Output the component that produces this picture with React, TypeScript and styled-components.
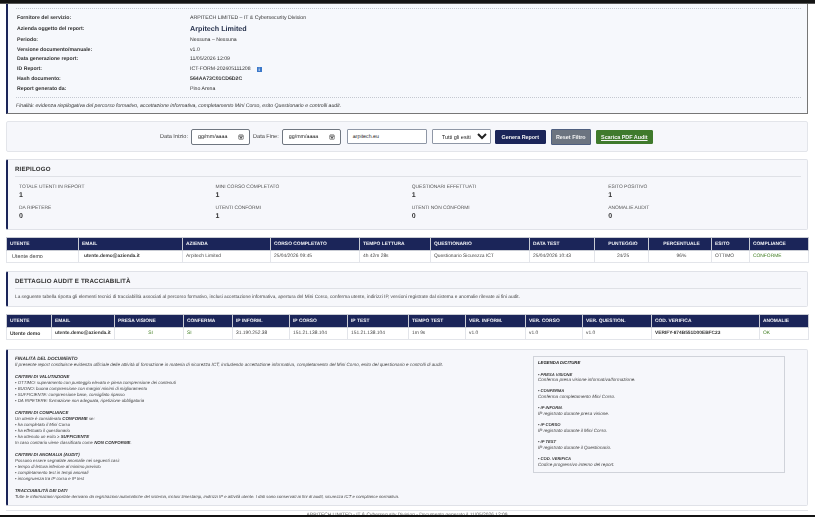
import React from "react";
import styled, { createGlobalStyle } from "styled-components";

const GlobalStyle = createGlobalStyle`
  html, body {
    margin: 0;
    height: 517px;
    overflow: hidden;
    background: #fff;
    font-family: "Liberation Sans", Arial, sans-serif;
    color: #222;
    text-rendering: geometricPrecision;
  }
`;

const Page = styled.div`
  position: relative;
  height: 517px;
  overflow: hidden;
  filter: blur(0.3px);
`;

const TopBar = styled.div`
  height: 4px;
  background: #141414;
  border-bottom: 1px solid #555;
  box-sizing: border-box;
`;

const Content = styled.div`
  padding: 0 7px 0 6px;
`;

const HeaderPanel = styled.section`
  box-sizing: border-box;
  height: 110px;
  background: #f6f8fc;
  border: 1px solid #777;
  border-top: 0;
  border-left: 2px solid #1b2559;
  padding: 4px 6px 0 8px;
`;

const Dotted = styled.div`
  border-top: 1px dotted #c4c8d0;
`;

const InfoGrid = styled.dl`
  display: grid;
  grid-template-columns: 173px 1fr;
  grid-template-rows: 9.8px 12.5px repeat(6, 9.8px);
  align-items: center;
  margin: 3.7px 0 3px;
  padding-left: 1px;
`;

const InfoLabel = styled.dt`
  font-size: 5.2px;
  font-weight: bold;
  color: #333;
`;

const InfoValue = styled.dd<{ $strong?: boolean }>`
  margin: 0;
  font-size: 5.2px;
  font-weight: ${(p) => (p.$strong ? "bold" : "normal")};
  color: #333;
  display: flex;
  align-items: center;
  gap: 6px;
`;

const CompanyValue = styled.dd`
  margin: 0;
  font-size: 7.2px;
  font-weight: bold;
  color: #2a3550;
`;

const InfoBadge = styled.span`
  width: 5px;
  height: 5px;
  background: #3b78c9;
  color: #fff;
  font-size: 4.5px;
  font-weight: bold;
  line-height: 5px;
  text-align: center;
`;

const Purpose = styled.p`
  margin: 5px 0 0;
  font-size: 5.15px;
  font-style: italic;
  color: #333;
`;

const FilterBar = styled.form`
  box-sizing: border-box;
  height: 31px;
  margin-top: 7px;
  background: #f6f7fb;
  border: 1px solid #e3e5ea;
  border-radius: 2px;
  padding-left: 153px;
  display: flex;
  align-items: center;
`;

const FilterLabel = styled.label`
  font-size: 5.6px;
  color: #444;
  margin-right: 3px;
`;

const DateField = styled.div`
  box-sizing: border-box;
  width: 59px;
  height: 16px;
  margin-right: 3px;
  background: #fff;
  border: 1px solid #6f7680;
  border-radius: 2px;
  padding: 0 5px 0 6px;
  font-size: 5.3px;
  color: #222;
  display: flex;
  align-items: center;
  justify-content: space-between;
`;

const DomainField = styled.div`
  box-sizing: border-box;
  width: 80px;
  height: 15px;
  margin: 0 5px 0 3px;
  background: #fff;
  border: 1px solid #8f97a6;
  border-radius: 1px;
  padding-left: 5px;
  font-size: 5.3px;
  line-height: 14px;
`;

const OutcomeSelect = styled.select`
  box-sizing: border-box;
  width: 59px;
  height: 15px;
  margin-right: 4px;
  background: #fff;
  border: 1px solid #8f97a6;
  border-radius: 1px;
  padding: 0 0 0 5px;
  font-family: inherit;
  font-size: 5.5px;
  color: #222;
`;

const ActionButton = styled.button<{ $bg: string; $w: number; $h?: number; $under?: boolean }>`
  box-sizing: border-box;
  width: ${(p) => p.$w}px;
  height: ${(p) => p.$h ?? 14}px;
  margin-right: 5px;
  padding: 0;
  background: ${(p) => p.$bg};
  border: 1px solid ${(p) => (p.$h ? "#4f5f80" : p.$bg)};
  border-radius: 1px;
  color: #f4f4f4;
  font-family: inherit;
  font-size: 5.4px;
  font-weight: bold;
  text-decoration: ${(p) => (p.$under ? "underline" : "none")};
`;

const Card = styled.section<{ $h: number; $mt: number }>`
  box-sizing: border-box;
  height: ${(p) => p.$h}px;
  margin-top: ${(p) => p.$mt}px;
  background: #f6f7fb;
  border: 1px solid #e0e2e8;
  border-left: 2px solid #1b2559;
  border-radius: 2px;
`;

const CardHead = styled.h2<{ $top: number }>`
  margin: 0 6px 0 7px;
  padding: ${(p) => p.$top}px 0 3.2px;
  font-size: 6.2px;
  line-height: 7px;
  letter-spacing: 0.15px;
  font-weight: bold;
  color: #333;
  border-bottom: 1px solid #dfe1e6;
`;

const StatsGrid = styled.div`
  display: grid;
  grid-template-columns: repeat(4, 196.4px);
  grid-auto-rows: 20.4px;
  padding: 8px 0 0 11px;
`;

const Stat = styled.div`
  display: flex;
  flex-direction: column;
  gap: 2px;
`;

const StatLabel = styled.span`
  font-size: 4.9px;
  line-height: 5px;
  color: #555;
`;

const StatValue = styled.span`
  font-size: 7px;
  line-height: 7px;
  font-weight: bold;
  color: #333;
`;

const AuditNote = styled.p`
  margin: 6px 0 0 7px;
  font-size: 4.76px;
  line-height: 6px;
  color: #444;
`;

const DataTable = styled.table<{ $mt: number }>`
  width: 802px;
  margin-top: ${(p) => p.$mt}px;
  table-layout: fixed;
  border-collapse: collapse;
  border: 1px solid #d8dbe2;
`;

const HeadCell = styled.th<{ $center?: boolean }>`
  height: 12px;
  padding: 0 0 0 3px;
  background: #1b2559;
  border: 1px solid #c9ccd4;
  color: #f2f3f7;
  font-size: 4.9px;
  font-weight: bold;
  text-align: ${(p) => (p.$center ? "center" : "left")};
  overflow: hidden;
  white-space: nowrap;
`;

const BodyCell = styled.td<{ $center?: boolean; $strong?: boolean; $ok?: boolean; $pad?: number; $size?: number }>`
  height: 11px;
  padding: 0 0 0 ${(p) => p.$pad ?? 3}px;
  border: 1px solid #e3e5ea;
  background: #fff;
  color: ${(p) => (p.$ok ? "#3f7d20" : p.$strong ? "#333" : "#444")};
  font-size: ${(p) => p.$size ?? (p.$strong ? 4.85 : 4.9)}px;
  font-weight: ${(p) => (p.$strong ? "bold" : "normal")};
  text-align: ${(p) => (p.$center ? "center" : "left")};
  overflow: hidden;
  white-space: nowrap;
`;

const NotesCard = styled(Card)`
  display: flex;
  justify-content: space-between;
  padding: 6px 22px 0 7px;
`;

const NotesText = styled.div`
  width: 440px;
  line-height: 6px;
  font-style: italic;
  color: #444;
`;

const NoteBlock = styled.div<{ $size: number }>`
  margin-bottom: 6px;
  font-size: ${(p) => p.$size}px;
  white-space: pre-line;
`;

const NoteTitle = styled.div`
  font-weight: bold;
  color: #333;
`;

const NoteStrong = styled.strong`
  color: #333;
`;

const Legend = styled.aside`
  box-sizing: border-box;
  width: 252px;
  height: 117px;
  background: #f6f7fb;
  border: 1px solid #d0d3da;
  padding: 3px 4px;
  font-size: 4.6px;
  line-height: 5.6px;
  font-style: italic;
  color: #444;
`;

const LegendTitle = styled.div`
  font-size: 4.3px;
  font-weight: bold;
  color: #222;
  margin-bottom: 6px;
`;

const LegendItem = styled.div`
  margin-bottom: 5.7px;
`;

const LegendTerm = styled.div`
  font-size: 4.1px;
  font-weight: bold;
  color: #333;
`;

const FooterRule = styled.div`
  margin-top: 4px;
  border-top: 1px solid #e3e5ea;
`;

const FooterText = styled.div`
  margin-top: 2px;
  font-size: 4.9px;
  text-align: center;
  color: #666;
`;

const BottomBar = styled.div`
  position: absolute;
  left: 0;
  right: 0;
  bottom: 0;
  height: 2px;
  background: #141414;
`;

const CalendarIcon = () => (
  <svg width="6" height="6" viewBox="0 0 12 12" fill="none" stroke="#444" strokeWidth="1.2">
    <rect x="1.5" y="2" width="9" height="8.5" rx="1" />
    <path d="M1.5 4.8h9M4 1v2M8 1v2" />
    <rect x="4" y="6.3" width="4" height="2.5" fill="#444" stroke="none" />
  </svg>
);

const info: [string, string][] = [
  ["Periodo:", "Nessuna  –  Nessuna"],
  ["Versione documento/manuale:", "v1.0"],
  ["Data generazione report:", "11/05/2026 12:09"],
];

const stats = [
  ["TOTALE UTENTI IN REPORT", 1],
  ["MINI CORSO COMPLETATO", 1],
  ["QUESTIONARI EFFETTUATI", 1],
  ["ESITO POSITIVO", 1],
  ["DA RIPETERE", 0],
  ["UTENTI CONFORMI", 1],
  ["UTENTI NON CONFORMI", 0],
  ["ANOMALIE AUDIT", 0],
];

type Column = {
  title: string;
  width: number;
  value: string;
  center?: boolean;
  headCenter?: boolean;
  strong?: boolean;
  ok?: boolean;
  pad?: number;
  size?: number;
};

const summaryColumns: Column[] = [
  { title: "UTENTE", width: 72, value: "Utente demo", pad: 5, size: 5.4 },
  { title: "EMAIL", width: 104, value: "utente.demo@azienda.it", strong: true, pad: 5 },
  { title: "AZIENDA", width: 88, value: "Arpitech Limited" },
  { title: "CORSO COMPLETATO", width: 89, value: "25/04/2026 09:45" },
  { title: "TEMPO LETTURA", width: 71, value: "4h 42m 28s" },
  { title: "QUESTIONARIO", width: 99, value: "Questionario Sicurezza ICT" },
  { title: "DATA TEST", width: 65, value: "25/04/2026 10:43" },
  { title: "PUNTEGGIO", width: 54, value: "24/25", center: true, headCenter: true },
  { title: "PERCENTUALE", width: 63, value: "96%", center: true, headCenter: true },
  { title: "ESITO", width: 38, value: "OTTIMO" },
  { title: "COMPLIANCE", width: 59, value: "CONFORME", ok: true },
];

const auditColumns: Column[] = [
  { title: "UTENTE", width: 45, value: "Utente demo", strong: true, size: 5 },
  { title: "EMAIL", width: 63, value: "utente.demo@azienda.it", strong: true },
  { title: "PRESA VISIONE", width: 69, value: "SI", center: true, ok: true },
  { title: "CONFERMA", width: 49, value: "SI", ok: true },
  { title: "IP INFORM.", width: 57, value: "31.190.252.38" },
  { title: "IP CORSO", width: 58, value: "151.21.138.104" },
  { title: "IP TEST", width: 61, value: "151.21.138.104" },
  { title: "TEMPO TEST", width: 57, value: "1m 9s" },
  { title: "VER. INFORM.", width: 60, value: "v1.0" },
  { title: "VER. CORSO", width: 57, value: "v1.0" },
  { title: "VER. QUESTION.", width: 69, value: "v1.0" },
  { title: "COD. VERIFICA", width: 108, value: "VERIFY-874B551D00EBFC23", strong: true, size: 4.8 },
  { title: "ANOMALIE", width: 49, value: "OK", ok: true },
];

const Table = ({ columns, mt }: { columns: Column[]; mt: number }) => (
  <DataTable $mt={mt}>
    <colgroup>
      {columns.map((c) => (
        <col key={c.title} width={c.width} />
      ))}
    </colgroup>
    <thead>
      <tr>
        {columns.map((c) => (
          <HeadCell key={c.title} $center={c.headCenter}>
            {c.title}
          </HeadCell>
        ))}
      </tr>
    </thead>
    <tbody>
      <tr>
        {columns.map((c) => (
          <BodyCell key={c.title} $center={c.center} $strong={c.strong} $ok={c.ok} $pad={c.pad} $size={c.size}>
            {c.value}
          </BodyCell>
        ))}
      </tr>
    </tbody>
  </DataTable>
);

const notes: { title: string; size: number; body: React.ReactNode }[] = [
  {
    title: "FINALITÀ DEL DOCUMENTO",
    size: 4.6,
    body: "Il presente report costituisce evidenza ufficiale delle attività di formazione in materia di sicurezza ICT, includendo accettazione informativa, completamento del Mini Corso, esito del questionario e controlli di audit.",
  },
  {
    title: "CRITERI DI VALUTAZIONE",
    size: 4.35,
    body: "• OTTIMO: superamento con punteggio elevato e piena comprensione dei contenuti\n• BUONO: buona comprensione con margini minimi di miglioramento\n• SUFFICIENTE: comprensione base, consigliato ripasso\n• DA RIPETERE: formazione non adeguata, ripetizione obbligatoria",
  },
  {
    title: "CRITERI DI COMPLIANCE",
    size: 4.35,
    body: (
      <>
        Un utente è considerato <NoteStrong>CONFORME</NoteStrong> se:
        {"\n• ha completato il Mini Corso\n• ha effettuato il questionario\n• ha ottenuto un esito ≥ "}
        <NoteStrong>SUFFICIENTE</NoteStrong>
        {"\nIn caso contrario viene classificato come "}
        <NoteStrong>NON CONFORME</NoteStrong>.
      </>
    ),
  },
  {
    title: "CRITERI DI ANOMALIA (AUDIT)",
    size: 4.35,
    body: "Possono essere segnalate anomalie nei seguenti casi:\n• tempo di lettura inferiore al minimo previsto\n• completamento test in tempi anomali\n• incongruenza tra IP corso e IP test",
  },
  {
    title: "TRACCIABILITÀ DEI DATI",
    size: 4.3,
    body: "Tutte le informazioni riportate derivano da registrazioni automatiche del sistema, inclusi timestamp, indirizzi IP e attività utente. I dati sono conservati ai fini di audit, sicurezza ICT e compliance normativa.",
  },
];

const legend = [
  ["• PRESA VISIONE", "Conferma presa visione informativa/formazione."],
  ["• CONFERMA", "Conferma completamento Mini Corso."],
  ["• IP INFORM.", "IP registrato durante presa visione."],
  ["• IP CORSO", "IP registrato durante il Mini Corso."],
  ["• IP TEST", "IP registrato durante il Questionario."],
  ["• COD. VERIFICA", "Codice progressivo interno del report."],
];

export default function App() {
  return (
    <Page>
      <GlobalStyle />
      <TopBar />
      <Content>
        <HeaderPanel>
          <Dotted />
          <InfoGrid>
            <InfoLabel>Fornitore del servizio:</InfoLabel>
            <InfoValue>ARPITECH LIMITED – IT &amp; Cybersecurity Division</InfoValue>
            <InfoLabel>Azienda oggetto del report:</InfoLabel>
            <CompanyValue>Arpitech Limited</CompanyValue>
            {info.map(([label, value]) => (
              <React.Fragment key={label}>
                <InfoLabel>{label}</InfoLabel>
                <InfoValue>{value}</InfoValue>
              </React.Fragment>
            ))}
            <InfoLabel>ID Report:</InfoLabel>
            <InfoValue>
              ICT-FORM-202605111208 <InfoBadge>i</InfoBadge>
            </InfoValue>
            <InfoLabel>Hash documento:</InfoLabel>
            <InfoValue $strong>564AA73C01CD6D2C</InfoValue>
            <InfoLabel>Report generato da:</InfoLabel>
            <InfoValue>Pino Arena</InfoValue>
          </InfoGrid>
          <Dotted />
          <Purpose>
            Finalità: evidenza riepilogativa del percorso formativo, accettazione informativa, completamento Mini Corso,
            esito Questionario e controlli audit.
          </Purpose>
        </HeaderPanel>

        <FilterBar>
          <FilterLabel>Data Inizio:</FilterLabel>
          <DateField>
            gg/mm/aaaa <CalendarIcon />
          </DateField>
          <FilterLabel>Data Fine:</FilterLabel>
          <DateField>
            gg/mm/aaaa <CalendarIcon />
          </DateField>
          <DomainField>arpitech.eu</DomainField>
          <OutcomeSelect defaultValue="all">
            <option value="all">Tutti gli esiti</option>
          </OutcomeSelect>
          <ActionButton type="button" $bg="#1b2559" $w={51}>
            Genera Report
          </ActionButton>
          <ActionButton type="button" $bg="#6c7480" $w={40} $h={16}>
            Reset Filtro
          </ActionButton>
          <ActionButton type="button" $bg="#3f7a2c" $w={57} $under>
            Scarica PDF Audit
          </ActionButton>
        </FilterBar>

        <Card $h={71} $mt={7}>
          <CardHead $top={6}>RIEPILOGO</CardHead>
          <StatsGrid>
            {stats.map(([label, value]) => (
              <Stat key={label}>
                <StatLabel>{label}</StatLabel>
                <StatValue>{value}</StatValue>
              </Stat>
            ))}
          </StatsGrid>
        </Card>

        <Table columns={summaryColumns} mt={7} />

        <Card $h={36} $mt={8}>
          <CardHead $top={5.5}>DETTAGLIO AUDIT E TRACCIABILITÀ</CardHead>
          <AuditNote>
            La seguente tabella riporta gli elementi tecnici di tracciabilità associati al percorso formativo, inclusi
            accettazione informativa, apertura del Mini Corso, conferma utente, indirizzi IP, versioni registrate dal
            sistema e anomalie rilevate ai fini audit.
          </AuditNote>
        </Card>

        <Table columns={auditColumns} mt={7} />

        <NotesCard $h={157} $mt={9}>
          <NotesText>
            {notes.map((n) => (
              <NoteBlock key={n.title} $size={n.size}>
                <NoteTitle>{n.title}</NoteTitle>
                {n.body}
              </NoteBlock>
            ))}
          </NotesText>
          <Legend>
            <LegendTitle>LEGENDA DICITURE</LegendTitle>
            {legend.map(([term, text]) => (
              <LegendItem key={term}>
                <LegendTerm>{term}</LegendTerm>
                {text}
              </LegendItem>
            ))}
          </Legend>
        </NotesCard>

        <FooterRule />
        <FooterText>ARPITECH LIMITED - IT &amp; Cybersecurity Division - Documento generato il 11/05/2026 12:09</FooterText>
      </Content>
      <BottomBar />
    </Page>
  );
}
